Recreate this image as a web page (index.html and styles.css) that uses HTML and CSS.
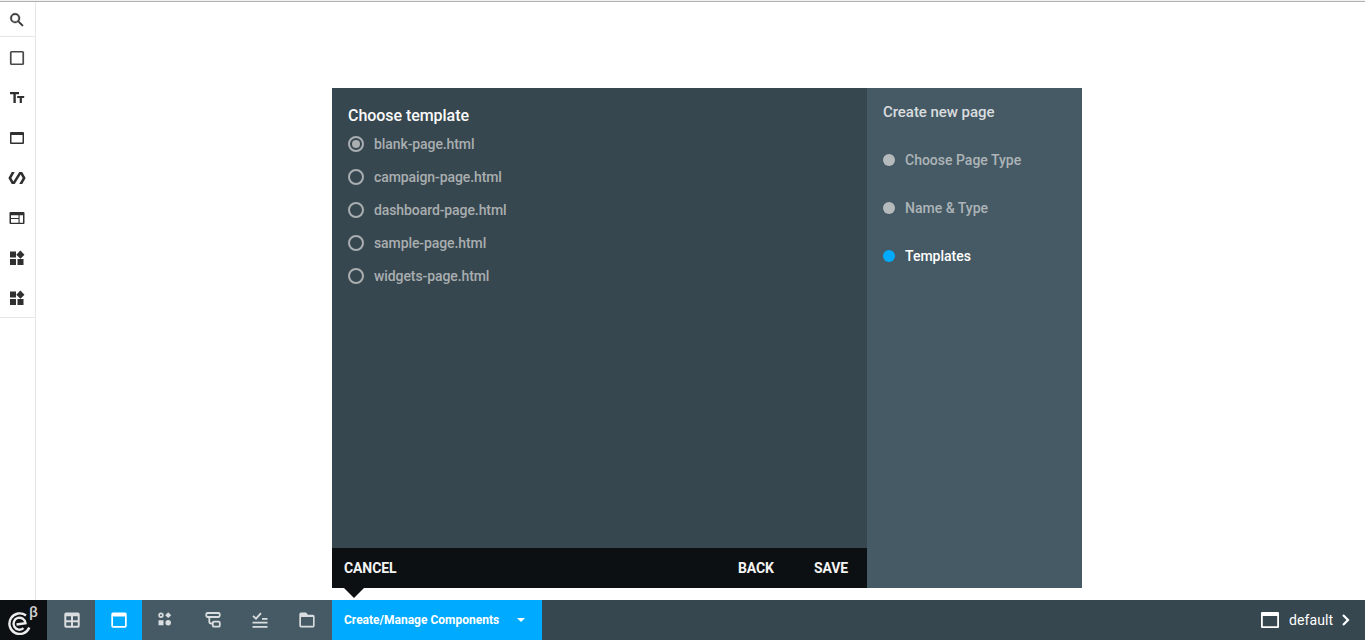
FILE: index.html
```html
<!DOCTYPE html>
<html lang="en">
<head>
<meta charset="utf-8">
<title>Create new page</title>
<link rel="stylesheet" href="styles.css">
</head>
<body>
<div class="app">
  <div class="workspace">
    <nav class="tools">
      <div class="tool tool-search"><svg class="icon18" viewBox="0 0 24 24"><path d="M15.5 14h-.79l-.28-.27A6.47 6.47 0 0 0 16 9.500 6.500 6.500 0 1 0 9.500 16c1.610 0 3.090-.59 4.230-1.570l.27.28v.79l5 4.990L20.490 19l-4.990-5zm-6 0a4.500 4.500 0 1 1 0-9 4.500 4.500 0 0 1 0 9z"/></svg></div>
      <div class="tool-list">
        <div class="tool"><svg class="icon18" viewBox="0 0 18 18"><rect class="line" x="2.750" y="2.750" width="12.500" height="12.500" rx=".8"/></svg></div>
        <div class="tool"><svg class="icon18" viewBox="0 0 18 18"><path d="M2 3h9v2.200H7.800V14H5.400V5.200H2zM9.200 7h7v2.100h-2.300V14h-2.200V9.100H9.200z"/></svg></div>
        <div class="tool"><svg class="icon18" viewBox="0 0 18 18"><path fill-rule="evenodd" d="M3 3h12a1 1 0 0 1 1 1v10a1 1 0 0 1-1 1H3a1 1 0 0 1-1-1V4a1 1 0 0 1 1-1zm.5 3v7.500h11V6z"/></svg></div>
        <div class="tool"><svg class="icon18" viewBox="0 0 24 24"><path d="M19 4h-4L7.110 16.630 4.500 12 9 4H5L.5 12 5 20h4l7.890-12.630L19.500 12 15 20h4l4.500-8z"/></svg></div>
        <div class="tool"><svg class="icon18" viewBox="0 0 18 18"><path fill-rule="evenodd" d="M2.500 3h13a1 1 0 0 1 1 1v10a1 1 0 0 1-1 1h-13a1 1 0 0 1-1-1V4a1 1 0 0 1 1-1zM3 6.300V9h7.500V6.300zM3 10v3.700h7.500V10zm8.600-3.700v7.400H15V6.300z"/></svg></div>
        <div class="tool"><svg class="icon18" viewBox="0 0 18 18"><path d="M2 2.500h6v6H2zM2 10h6v6H2zM9.500 10h6v6h-6zM12.400 1.600 16.500 5.700 12.400 9.800 8.300 5.700z"/></svg></div>
        <div class="tool"><svg class="icon18" viewBox="0 0 18 18"><path d="M2 2.500h6v6H2zM2 10h6v6H2zM9.500 10h6v6h-6zM12.400 1.600 16.500 5.700 12.400 9.800 8.300 5.700z"/></svg></div>
      </div>
    </nav>
    <main class="stage">
      <section class="dialog">
        <div class="panel">
          <div class="panel-body">
            <h1 class="panel-title">Choose template</h1>
            <ul class="options">
              <li class="option"><span class="radio radio-on"></span>blank-page.html</li>
              <li class="option"><span class="radio"></span>campaign-page.html</li>
              <li class="option"><span class="radio"></span>dashboard-page.html</li>
              <li class="option"><span class="radio"></span>sample-page.html</li>
              <li class="option"><span class="radio"></span>widgets-page.html</li>
            </ul>
          </div>
          <div class="actions">
            <span class="action cancel">CANCEL</span>
            <span class="action back">BACK</span>
            <span class="action">SAVE</span>
            <span class="pointer"></span>
          </div>
        </div>
        <aside class="steps">
          <h2 class="steps-title">Create new page</h2>
          <div class="step"><span class="dot"></span>Choose Page Type</div>
          <div class="step"><span class="dot"></span>Name &amp; Type</div>
          <div class="step step-active"><span class="dot"></span>Templates</div>
        </aside>
      </section>
    </main>
  </div>
  <footer class="bar">
    <div class="logo">
      <svg class="logo-mark" viewBox="0 0 24 24"><path d="M22.300 16.500A10.300 10.300 0 1 1 19 4.500"/><path d="M9.500 13.500 18.500 12.200A6 6 0 1 0 16.500 17.200"/></svg>
      <span class="beta">β</span>
    </div>
    <div class="tab tab-grid"><svg class="icon20" viewBox="0 0 20 20"><path fill-rule="evenodd" d="M4 2.500h12a1.700 1.700 0 0 1 1.700 1.700v11.800A1.700 1.700 0 0 1 16 17.700H4a1.700 1.700 0 0 1-1.700-1.700V4.200A1.700 1.700 0 0 1 4 2.500zm.3 3.800v3.900H9V6.300zm6.700 0v3.900h4.700V6.300zm-6.700 5.900v3.500H9v-3.500zm6.700 0v3.500h4.700v-3.500z"/></svg></div>
    <div class="tab tab-active"><svg class="icon20" viewBox="0 0 20 20"><path fill-rule="evenodd" d="M4 2.500h12A1.700 1.700 0 0 1 17.700 4.200V16A1.700 1.700 0 0 1 16 17.700H4A1.700 1.700 0 0 1 2.300 16V4.200A1.700 1.700 0 0 1 4 2.500zm0 4V16h12V6.500z"/></svg></div>
    <div class="tab tab-shapes"><svg class="icon20" viewBox="0 0 20 20"><path fill-rule="evenodd" d="M6 2.500a2.700 2.700 0 1 1 0 5.400 2.700 2.700 0 0 1 0-5.400zm0 1.700a1 1 0 1 0 0 2 1 1 0 0 0 0-2zM13.200 2.300l3 2.900-3 2.900-3-2.900zM3.500 10.200h5v5h-5zM13.200 10a2.750 2.750 0 1 1 0 5.500 2.750 2.750 0 0 1 0-5.500z"/></svg></div>
    <div class="tab tab-tree"><svg class="icon20" viewBox="0 0 20 20"><g class="line"><rect x="3.300" y="3" width="13.400" height="4" rx="1.200"/><rect x="9.800" y="11.700" width="7" height="5" rx="1.300"/><path d="M6.300 7v4.500q0 2 2 2h1.500"/></g></svg></div>
    <div class="tab tab-checks"><svg class="icon20" viewBox="0 0 20 20"><path class="line" d="M3 5.800 6 8.700 11 3.200M12 8.900h5.500M2.500 12.600h15M2.500 16.800h15"/></svg></div>
    <div class="tab tab-folder"><svg class="icon20" viewBox="0 0 20 20"><path fill-rule="evenodd" d="M4 2.500h5l2 2.200h5A1.700 1.700 0 0 1 17.600 6.400v9.400a1.700 1.700 0 0 1-1.600 1.700H4a1.700 1.700 0 0 1-1.700-1.700V4.200A1.700 1.700 0 0 1 4 2.500zm0 4.600v8.700h12V7.100z"/></svg></div>
    <div class="menu"><span>Create/Manage Components</span><i class="caret"></i></div>
    <div class="device">
      <svg class="device-icon" viewBox="0 0 18 16"><path fill-rule="evenodd" d="M1 0h16a1 1 0 0 1 1 1v14a1 1 0 0 1-1 1H1a1 1 0 0 1-1-1V1a1 1 0 0 1 1-1zm.8 4v10.300h14.400V4z"/></svg>
      <span class="device-name">default</span>
      <svg class="chevron" viewBox="0 0 8 12"><path d="M1 1l5 5-5 5"/></svg>
    </div>
  </footer>
</div>
</body>
</html>
```
FILE: styles.css
```css
* { box-sizing: border-box; }
body { margin: 0; background: #fff; font-family: Roboto, sans-serif; font-weight: 500; }
svg { display: block; flex: none; }
.app { display: flex; flex-direction: column; width: 1365px; height: 640px; overflow: hidden; }
.workspace { display: flex; flex: 1; align-items: stretch; border-top: 1px solid #f2f2f2; box-shadow: inset 0 1px #b0b0b0; }
.tools { width: 36px; margin-top: 1px; border-right: 1px solid #e6e6e6; fill: #303030; }
.tool { display: flex; align-items: center; justify-content: center; height: 40px; padding-right: 1px; }
.tool-search { height: 35px; padding-top: 2px; border-bottom: 1px solid #e6e6e6; }
.tool-search .icon18 { stroke: #303030; stroke-width: .5; }
.tool-list { height: 281px; padding-top: 1px; border-bottom: 1px solid #e6e6e6; }
.icon18 { width: 18px; height: 18px; }
.icon18 .line { fill: none; stroke: #484848; stroke-width: 1.7; }
.icon20 { width: 20px; height: 20px; }
.icon20 .line { fill: none; stroke: #dadddf; stroke-width: 1.8; }
.stage { padding: 87px 0 0 296px; }
.dialog { display: flex; width: 750px; height: 500px; }
.panel { display: flex; flex-direction: column; width: 535px; background: #37474f; }
.panel-body { flex: 1; padding: 16px; }
.panel-title { margin: 0; font-size: 16px; font-weight: 500; line-height: 23px; letter-spacing: -.05px; color: #fafafa; }
.options { margin: 0; padding: 0; list-style: none; }
.option { display: flex; align-items: center; gap: 10px; height: 33px; font-size: 14px; letter-spacing: -.09px; color: #a9aeb0; }
.radio { display: flex; align-items: center; justify-content: center; width: 16px; height: 16px; border: 2px solid #a9aeb0; border-radius: 50%; }
.radio-on::after { content: ""; width: 8px; height: 8px; border-radius: 50%; background: #a9aeb0; }
.actions { position: relative; display: flex; align-items: center; height: 40px; padding: 0 19px 0 12px; background: #0c1013; color: #f4f4f4; font-size: 14px; font-weight: 700; letter-spacing: -.1px; }
.cancel { flex: 1; }
.back { margin-right: 40px; }
.pointer { position: absolute; left: 12px; top: 40px; border: solid transparent; border-width: 10px 10px 0; border-top-color: #0c1013; }
.steps { width: 215px; padding: 12px 16px; background: #455a64; color: #adb4b8; font-size: 14px; }
.steps-title { margin: 0 0 12px; font-size: 15px; font-weight: 500; line-height: 24px; letter-spacing: -.05px; color: #dadddf; }
.step { display: flex; align-items: center; gap: 10px; height: 48px; }
.dot { width: 12px; height: 12px; border-radius: 50%; background: #b5babd; }
.step-active { color: #fff; }
.step-active .dot { background: #00aaff; }
.bar { display: flex; height: 40px; background: #37474f; }
.logo { position: relative; width: 47px; background: #0c1013; }
.logo-mark { width: 24px; height: 24px; margin: 11px 0 0 7px; fill: none; stroke: #ececec; stroke-width: 2.4; }
.beta { position: absolute; left: 29px; top: 3px; font-size: 15px; line-height: 18px; font-weight: 500; color: #d0d0d0; }
.tab { display: flex; align-items: center; justify-content: center; width: 47px; background: #455a64; fill: #dadddf; }
.tab-grid { width: 48px; padding-left: 2px; }
.tab-active { background: #00aaff; fill: #fff; }
.tab-shapes { padding-right: 1px; }
.tab-tree { width: 48px; }
.tab-checks { padding-right: 1px; }
.tab-folder { width: 48px; padding-right: 2px; }
.menu { display: flex; align-items: center; justify-content: space-between; width: 210px; padding: 0 17px 0 12px; background: #00aaff; color: #fff; font-size: 12px; font-weight: 700; }
.caret { border: solid transparent; border-width: 4px 4px 0; border-top-color: #fff; }
.device { display: flex; align-items: center; margin-left: auto; padding-right: 15px; color: #fff; font-size: 14px; }
.device-icon { width: 18px; height: 16px; margin-right: 10px; fill: #fff; }
.device-name { width: 44px; font-weight: 400; letter-spacing: .1px; }
.chevron { width: 8px; height: 12px; margin-left: 9px; fill: none; stroke: #fff; stroke-width: 2.2; }
```
